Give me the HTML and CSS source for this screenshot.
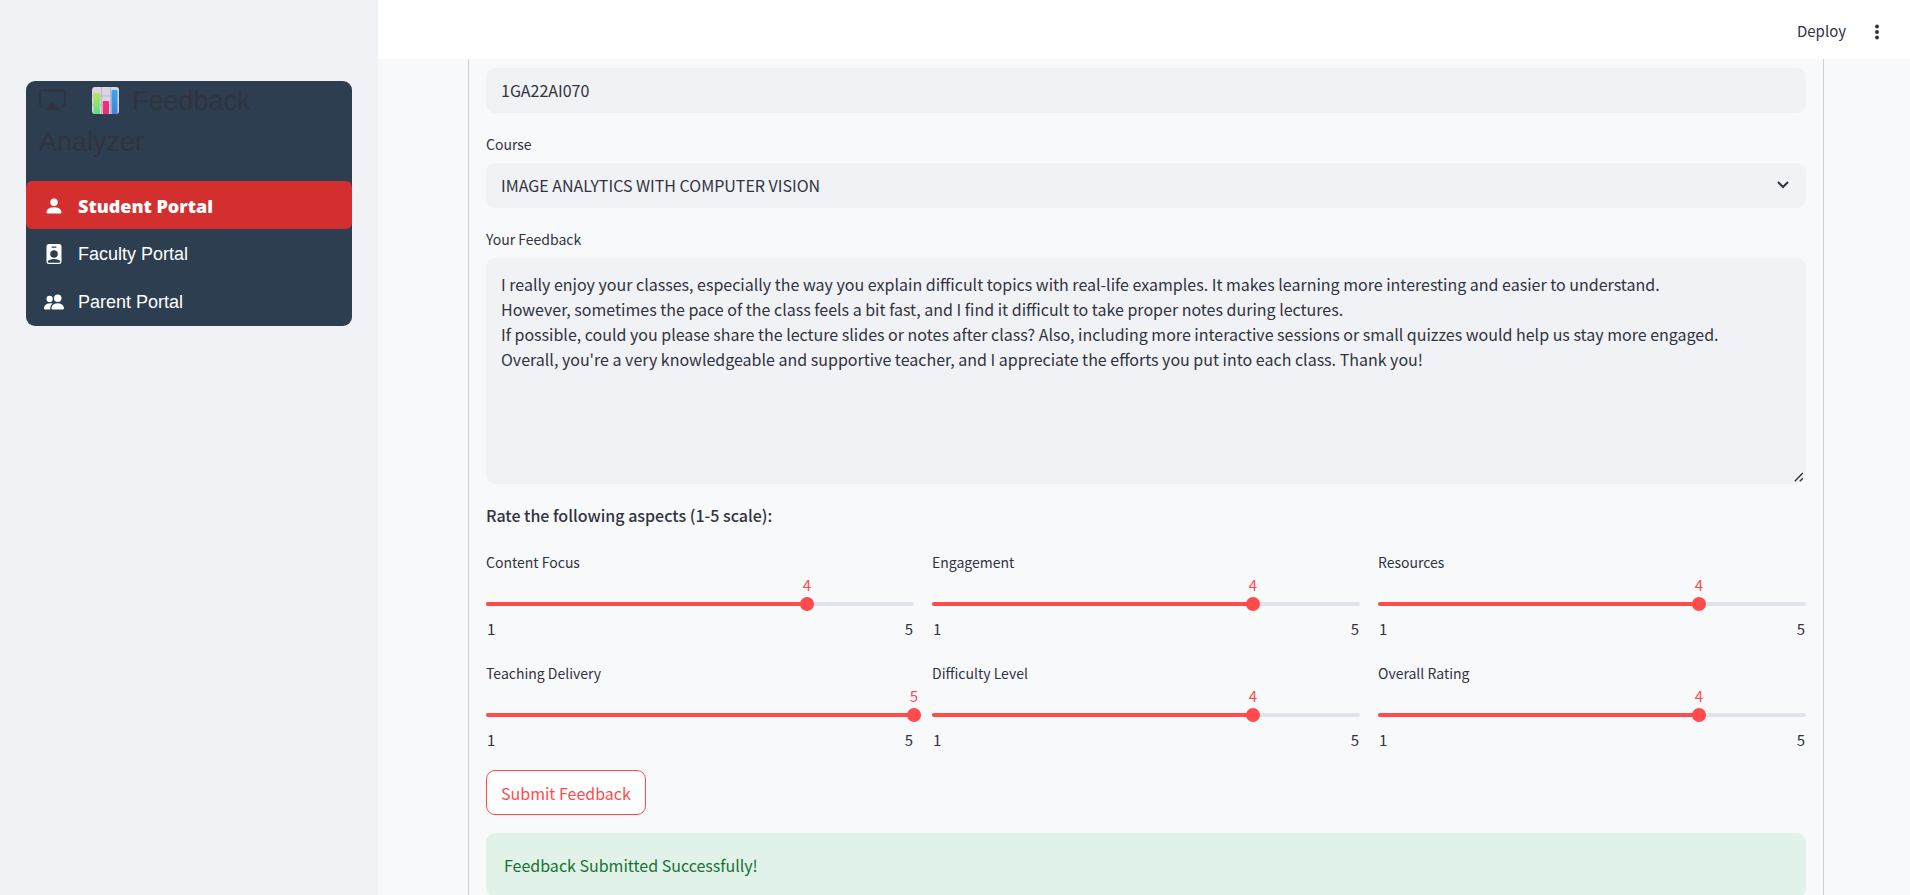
FILE: index.html
```html
<!DOCTYPE html>
<html lang="en">
<head>
<meta charset="utf-8">
<title>Feedback Analyzer</title>
<link rel="stylesheet" href="styles.css">
</head>
<body>
<div class="app">
  <aside class="sidebar">
    <nav class="menu" aria-label="Portals">
      <div class="menu-title">
        <svg class="title-icon" viewBox="0 0 16 16" fill="currentColor" aria-hidden="true"><path d="M3 11.500H1.800A1.300 1.300 0 0 1 .5 10.200V3.300A1.300 1.300 0 0 1 1.800 2h12.400a1.300 1.300 0 0 1 1.300 1.300v6.900a1.300 1.300 0 0 1-1.300 1.300H13" fill="none" stroke="currentColor" stroke-width=".9"/><path d="M7.600 9.300a.5.500 0 0 1 .8 0l3.900 3.500a.5.500 0 0 1-.3.900H4a.5.500 0 0 1-.3-.9z"/></svg>
        <svg class="chart-icon" viewBox="0 0 27 27" aria-hidden="true">
          <defs>
            <linearGradient id="green" x1="0" y1="0" x2="0" y2="1"><stop offset="0" stop-color="#b4e858"/><stop offset="1" stop-color="#5bdc8c"/></linearGradient>
            <linearGradient id="blue" x1="0" y1="0" x2="0" y2="1"><stop offset="0" stop-color="#2fa8f5"/><stop offset="1" stop-color="#4a7fd4"/></linearGradient>
          </defs>
          <rect width="27" height="27" rx="3" fill="#dbd5e2"/>
          <path d="M9.500 0v27M18.500 0v27M0 9h27M0 18h27" stroke="#bcb3c8"/>
          <rect x="1.500" y="6" width="6.500" height="21" rx="1" fill="url(#green)"/>
          <rect x="10.800" y="14" width="6.200" height="13" rx="1" fill="#ec2f7b"/>
          <rect x="19.500" y="3" width="6" height="24" rx="1" fill="url(#blue)"/>
        </svg>
        <span>Feedback Analyzer</span>
      </div>
      <a class="menu-item active" href="#student" aria-current="page"><svg viewBox="0 0 16 16" fill="currentColor" aria-hidden="true"><path d="M3 14s-1 0-1-1 1-4 6-4 6 3 6 4-1 1-1 1zm5-6a3 3 0 1 0 0-6 3 3 0 0 0 0 6"/></svg>Student Portal</a>
      <a class="menu-item" href="#faculty"><svg viewBox="0 0 16 16" fill="currentColor" aria-hidden="true"><path d="M2 2a2 2 0 0 1 2-2h8a2 2 0 0 1 2 2v12a2 2 0 0 1-2 2H4a2 2 0 0 1-2-2zm4.500 0a.5.500 0 0 0 0 1h3a.5.500 0 0 0 0-1zM8 11a3 3 0 1 0 0-6 3 3 0 0 0 0 6m5 2.755C12.146 12.825 10.623 12 8 12s-4.146.826-5 1.755V14a1 1 0 0 0 1 1h8a1 1 0 0 0 1-1z"/></svg>Faculty Portal</a>
      <a class="menu-item" href="#parent"><svg viewBox="0 0 16 16" fill="currentColor" aria-hidden="true"><path d="M7 14s-1 0-1-1 1-4 5-4 5 3 5 4-1 1-1 1zm4-6a3 3 0 1 0 0-6 3 3 0 0 0 0 6m-5.784 6A2.240 2.240 0 0 1 5 13c0-1.355.680-2.750 1.936-3.720A6.300 6.300 0 0 0 5 9c-4 0-5 3-5 4s1 1 1 1zM4.500 8a2.500 2.500 0 1 0 0-5 2.500 2.500 0 0 0 0 5"/></svg>Parent Portal</a>
    </nav>
  </aside>
  <div class="page">
    <header class="toolbar">
      <button class="deploy" type="button">Deploy</button>
      <button class="more" type="button" aria-label="Main menu"><svg viewBox="0 0 18 18" fill="currentColor" aria-hidden="true"><circle cx="9" cy="3.400" r="2"/><circle cx="9" cy="9" r="2"/><circle cx="9" cy="14.600" r="2"/></svg></button>
    </header>
    <main class="content">
      <form class="form">
        <input class="control" type="text" value="1GA22AI070" aria-label="Student ID">
        <div class="field">
          <label for="course">Course</label>
          <div class="select-box">
            <select class="control" id="course"><option>IMAGE ANALYTICS WITH COMPUTER VISION</option></select>
            <svg class="chevron" viewBox="0 0 12 8" aria-hidden="true"><path d="M1.500 1.500 6 6l4.500-4.500" fill="none" stroke="currentColor" stroke-width="2" stroke-linecap="round"/></svg>
          </div>
        </div>
        <div class="field">
          <label for="feedback">Your Feedback</label>
          <div class="textarea-box">
            <textarea class="control" id="feedback">I really enjoy your classes, especially the way you explain difficult topics with real-life examples. It makes learning more interesting and easier to understand.
However, sometimes the pace of the class feels a bit fast, and I find it difficult to take proper notes during lectures.
If possible, could you please share the lecture slides or notes after class? Also, including more interactive sessions or small quizzes would help us stay more engaged.
Overall, you're a very knowledgeable and supportive teacher, and I appreciate the efforts you put into each class. Thank you!</textarea>
            <svg class="grip" viewBox="0 0 10 10" aria-hidden="true"><path d="M.8 9.200 8.800 1M5.800 9.200l3-3" fill="none" stroke="currentColor" stroke-width="1.400"/></svg>
          </div>
        </div>
        <p class="heading">Rate the following aspects (1-5 scale):</p>
        <div class="ratings">
          <div class="slider"><label for="r1">Content Focus</label><div class="value"><output for="r1" style="left:75%">4</output></div><div class="rail"><div class="fill" style="width:75%"></div><input id="r1" type="range" min="1" max="5" value="4"></div><div class="ticks"><span>1</span><span>5</span></div></div>
          <div class="slider"><label for="r2">Engagement</label><div class="value"><output for="r2" style="left:75%">4</output></div><div class="rail"><div class="fill" style="width:75%"></div><input id="r2" type="range" min="1" max="5" value="4"></div><div class="ticks"><span>1</span><span>5</span></div></div>
          <div class="slider"><label for="r3">Resources</label><div class="value"><output for="r3" style="left:75%">4</output></div><div class="rail"><div class="fill" style="width:75%"></div><input id="r3" type="range" min="1" max="5" value="4"></div><div class="ticks"><span>1</span><span>5</span></div></div>
          <div class="slider"><label for="r4">Teaching Delivery</label><div class="value"><output for="r4" style="left:100%">5</output></div><div class="rail"><div class="fill" style="width:100%"></div><input id="r4" type="range" min="1" max="5" value="5"></div><div class="ticks"><span>1</span><span>5</span></div></div>
          <div class="slider"><label for="r5">Difficulty Level</label><div class="value"><output for="r5" style="left:75%">4</output></div><div class="rail"><div class="fill" style="width:75%"></div><input id="r5" type="range" min="1" max="5" value="4"></div><div class="ticks"><span>1</span><span>5</span></div></div>
          <div class="slider"><label for="r6">Overall Rating</label><div class="value"><output for="r6" style="left:75%">4</output></div><div class="rail"><div class="fill" style="width:75%"></div><input id="r6" type="range" min="1" max="5" value="4"></div><div class="ticks"><span>1</span><span>5</span></div></div>
        </div>
        <button class="submit" type="button">Submit Feedback</button>
        <div class="alert" role="status">Feedback Submitted Successfully!</div>
      </form>
    </main>
  </div>
</div>
</body>
</html>
```
FILE: styles.css
```css
* { box-sizing: border-box; }

body {
  margin: 0;
  color: #31333f;
  background: #f8f9fb;
  font: 16px/24px "Noto Sans CJK SC", "Noto Sans", sans-serif;
}

button, input, select, textarea { font: inherit; color: inherit; }

.app { display: flex; height: 100vh; overflow: hidden; }

/* Sidebar */
.sidebar {
  flex: none;
  width: 378px;
  padding: 81px 26px 0;
  background: #f0f2f6;
}

.menu {
  overflow: hidden;
  padding-bottom: 1px;
  border-radius: 9px;
  background: #2c3e50;
  font-family: "Liberation Sans", Arial, sans-serif;
}

.menu-title {
  height: 100px;
  padding: 0 13px;
  font-size: 27px;
  line-height: 41px;
}

.title-icon { width: 27px; height: 27px; margin-right: 18px; vertical-align: -4px; }
.chart-icon { width: 27px; height: 27px; margin-right: 6px; vertical-align: -4px; }

.menu-item {
  display: flex;
  align-items: center;
  gap: 14px;
  height: 48px;
  padding: 2px 18px 0;
  border-radius: 6px;
  color: #fff;
  font-size: 18px;
  text-decoration: none;
}

.menu-item svg { width: 20px; height: 20px; }
.menu-item.active { background: #d32f2f; font-family: "Noto Sans", sans-serif; font-weight: 900; }

/* Main column */
.page { flex: 1; display: flex; flex-direction: column; min-width: 0; }

.toolbar {
  flex: none;
  display: flex;
  justify-content: flex-end;
  align-items: center;
  gap: 22px;
  height: 59px;
  padding: 4px 24px 0 0;
  background: #fff;
}

.deploy, .more { padding: 0; border: 0; background: none; }
.deploy { padding-bottom: 2px; font-size: 15px; }
.more { display: flex; }
.more svg { width: 18px; height: 18px; }

.content { flex: 1; min-height: 0; overflow: hidden; padding: 0 86px 0 90px; }

.form {
  display: flex;
  flex-direction: column;
  gap: 18px;
  padding: 9px 17px 18px;
  border: solid #cfd0d4;
  border-width: 0 1px;
}

.control {
  display: block;
  width: 100%;
  height: 45px;
  padding: 0 15px 2px;
  border: 0;
  border-radius: 9px;
  background: #f0f2f6;
}

label { display: block; margin-bottom: 2px; font-size: 14px; line-height: 22px; }
.field label { margin-bottom: 8px; padding-top: 2px; }

.select-box, .textarea-box { position: relative; }
.select-box select { appearance: none; }
.chevron { position: absolute; right: 17px; top: 18px; width: 12px; height: 8px; pointer-events: none; }

textarea.control { height: 226px; padding: 14px 15px; line-height: 25px; resize: vertical; }
textarea::-webkit-resizer { background: none; }
.grip { position: absolute; right: 2px; bottom: 2px; width: 10px; height: 10px; pointer-events: none; }

.heading { margin: 0 0 4px; font-weight: 500; line-height: 27px; }

/* Rating sliders */
.ratings { display: grid; grid-template-columns: repeat(3, 1fr); gap: 21px 18px; }

.value { position: relative; height: 22px; }
.value output {
  position: absolute;
  transform: translateX(-50%);
  color: #ff4b4b;
  font-size: 15px;
  line-height: 20px;
}

.rail {
  position: relative;
  height: 4px;
  margin: 5px 0;
  border-radius: 4px;
  background: #dfe3eb;
}

.fill { height: 4px; border-radius: 4px; background: #ff4b4b; }

.rail input {
  position: absolute;
  top: -5px;
  left: -7px;
  width: calc(100% + 14px);
  height: 14px;
  margin: 0;
  appearance: none;
  background: none;
}

.rail input::-webkit-slider-thumb {
  appearance: none;
  width: 14px;
  height: 14px;
  border-radius: 50%;
  background: #ff4b4b;
}

.ticks { display: flex; justify-content: space-between; padding: 8px 1px 2px; font-size: 15px; line-height: 20px; }

.submit {
  align-self: flex-start;
  height: 45px;
  padding: 0 14px;
  border: 1px solid #ff4b4b;
  border-radius: 9px;
  background: #fff;
  color: #ff4b4b;
}

.alert {
  padding: 20px 18px;
  border-radius: 9px;
  background: #e1f3e8;
  color: #177233;
}
```
